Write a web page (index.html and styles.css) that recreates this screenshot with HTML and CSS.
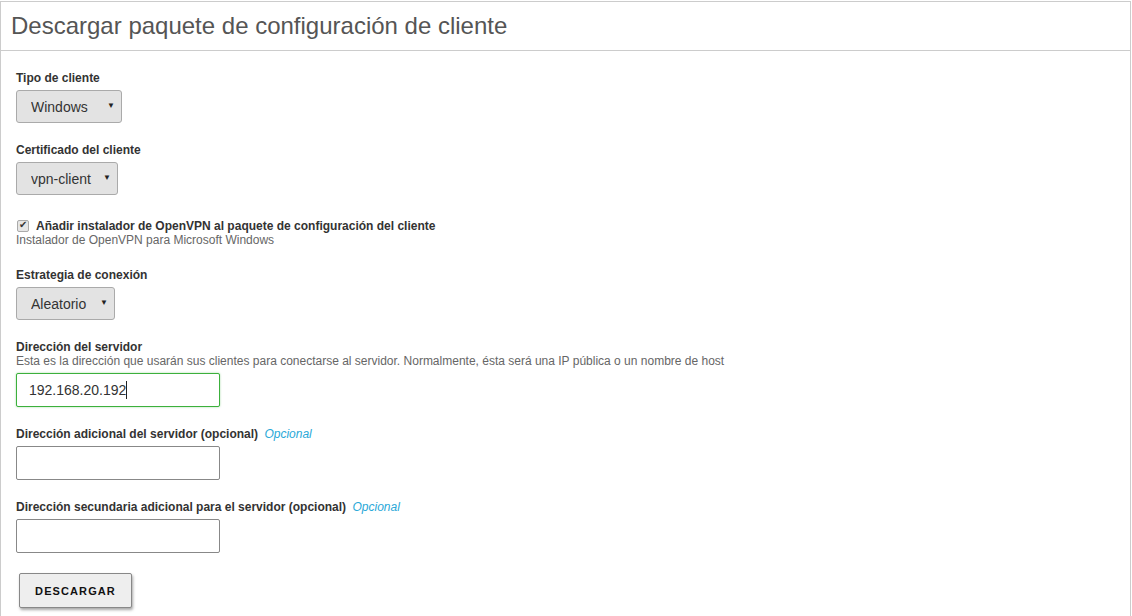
FILE: index.html
```html
<!DOCTYPE html>
<html lang="es">
<head>
    <meta charset="UTF-8">
    <meta name="viewport" content="width=device-width, initial-scale=1.0">
    <title>Descargar paquete de configuración de cliente</title>
    <link rel="stylesheet" href="styles.css">
</head>
<body>
    <div class="panel">
        <div class="panel-header">
            <h2>Descargar paquete de configuración de cliente</h2>
        </div>
        <form class="panel-body" onsubmit="return false">
            <div class="form-group">
                <label for="clientType">Tipo de cliente</label>
                <div class="select-wrap">
                    <select id="clientType" class="select-windows">
                        <option>Windows</option>
                        <option>Linux</option>
                        <option>MacOSX</option>
                    </select>
                </div>
            </div>

            <div class="form-group">
                <label for="clientCert">Certificado del cliente</label>
                <div class="select-wrap">
                    <select id="clientCert" class="select-cert">
                        <option>vpn-client</option>
                    </select>
                </div>
            </div>

            <div class="form-group check-group">
                <div class="check-row">
                    <input type="checkbox" id="installer" checked>
                    <label for="installer">Añadir instalador de OpenVPN al paquete de configuración del cliente</label>
                </div>
                <div class="help">Instalador de OpenVPN para Microsoft Windows</div>
            </div>

            <div class="form-group">
                <label for="strategy">Estrategia de conexión</label>
                <div class="select-wrap">
                    <select id="strategy" class="select-strategy">
                        <option>Aleatorio</option>
                        <option>Ordenado</option>
                    </select>
                </div>
            </div>

            <div class="form-group">
                <label for="server">Dirección del servidor</label>
                <div class="help help-above">Esta es la dirección que usarán sus clientes para conectarse al servidor. Normalmente, ésta será una IP pública o un nombre de host</div>
                <div class="input-wrap">
                    <input type="text" id="server" class="text-input active" value="192.168.20.192">
                    <span class="caret"></span>
                </div>
            </div>

            <div class="form-group">
                <label for="server2">Dirección adicional del servidor (opcional) <span class="optional">Opcional</span></label>
                <input type="text" id="server2" class="text-input">
            </div>

            <div class="form-group">
                <label for="server3">Dirección secundaria adicional para el servidor (opcional) <span class="optional">Opcional</span></label>
                <input type="text" id="server3" class="text-input">
            </div>

            <button type="submit" class="download-btn">Descargar</button>
        </form>
    </div>
</body>
</html>
```

FILE: styles.css
```css
* {
    margin: 0;
    padding: 0;
    box-sizing: border-box;
    font-family: 'Liberation Sans', Arial, sans-serif;
}

body {
    background: #fff;
    color: #333;
    padding-top: 1px;
}

.panel {
    width: 1131px;
    border: 1px solid #ccc;
    border-bottom: none;
    min-height: 620px;
}

.panel-header {
    height: 49px;
    border-bottom: 1px solid #ccc;
    padding: 10px 10px 0;
}

.panel-header h2 {
    font-size: 24px;
    font-weight: normal;
    color: #555;
    line-height: 28px;
}

.panel-body {
    padding: 20px 15px 0;
}

.form-group {
    margin-bottom: 20px;
}

.form-group > label {
    display: block;
    font-size: 12px;
    font-weight: bold;
    color: #333;
    line-height: 14px;
    margin-bottom: 5px;
}

.optional {
    font-weight: normal;
    font-style: italic;
    color: #2aa8d8;
    margin-left: 3px;
}

.select-wrap {
    position: relative;
    display: inline-block;
}

.select-wrap::after {
    content: "▼";
    position: absolute;
    right: 7px;
    top: 11px;
    font-size: 8px;
    color: #222;
    pointer-events: none;
}

.select-wrap select {
    appearance: none;
    -webkit-appearance: none;
    height: 33px;
    padding: 0 16px 0 14px;
    font-size: 14px;
    color: #333;
    background: #e3e3e3;
    border: 1px solid #aaa;
    border-radius: 3px;
}

.select-windows { width: 106px; }
.select-cert { width: 102px; }
.select-strategy { width: 99px; }

.check-group {
    padding-top: 4px;
    margin-bottom: 21px;
}

.check-row {
    display: flex;
    align-items: center;
    gap: 7px;
    height: 14px;
}

.check-row label {
    font-size: 12px;
    font-weight: bold;
    color: #333;
}

.check-row input {
    appearance: none;
    -webkit-appearance: none;
    width: 12px;
    height: 12px;
    border: 1px solid #aaa;
    border-radius: 2px;
    background: #e6e6e6;
    position: relative;
    margin-left: 1px;
}

.check-row input:checked::after {
    content: "✔";
    position: absolute;
    left: 1px;
    top: -2px;
    font-size: 10px;
    color: #333;
}

.help {
    font-size: 12px;
    color: #666;
    line-height: 14px;
}

.help-above {
    margin-top: -5px;
    margin-bottom: 5px;
}

.input-wrap {
    position: relative;
    width: 204px;
}

.caret {
    position: absolute;
    left: 110px;
    top: 8px;
    width: 1px;
    height: 18px;
    background: #222;
}

.text-input {
    display: block;
    width: 204px;
    height: 34px;
    border: 1px solid #888;
    border-radius: 2px;
    padding: 0 12px;
    font-size: 14px;
    color: #333;
    outline: none;
}

.text-input.active {
    border-color: #3cb03c;
    box-shadow: 0 0 2px rgba(60, 176, 60, 0.5);
}

.download-btn {
    margin-left: 3px;
    width: 113px;
    height: 35px;
    background: #eee;
    border: 1px solid #888;
    border-radius: 2px;
    box-shadow: 1px 2px 3px rgba(0, 0, 0, 0.35);
    font-size: 11px;
    font-weight: bold;
    letter-spacing: 1.1px;
    text-transform: uppercase;
    color: #111;
    cursor: pointer;
}
```
